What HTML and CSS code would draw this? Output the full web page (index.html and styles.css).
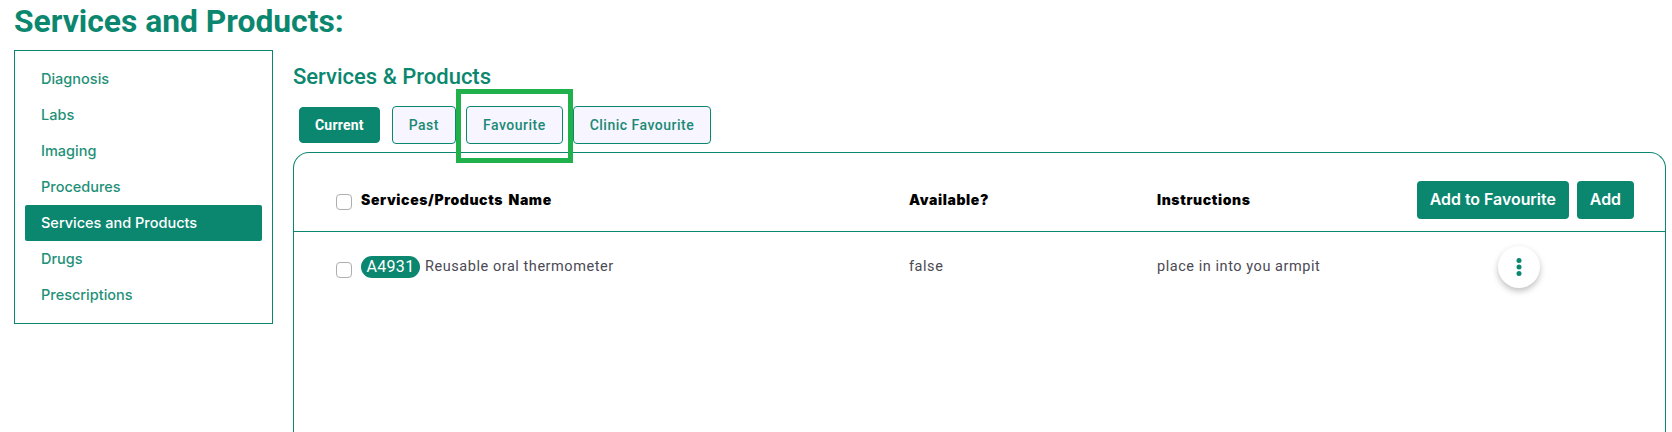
FILE: index.html
```html
<!DOCTYPE html>
<html lang="en">
<head>
<meta charset="utf-8">
<title>Services and Products</title>
<link rel="stylesheet" href="styles.css">
</head>
<body>
<h1 class="page-title">Services and Products:</h1>
<div class="layout">
  <nav class="side">
    <a class="side-item">Diagnosis</a>
    <a class="side-item">Labs</a>
    <a class="side-item">Imaging</a>
    <a class="side-item">Procedures</a>
    <a class="side-item active">Services and Products</a>
    <a class="side-item">Drugs</a>
    <a class="side-item">Prescriptions</a>
  </nav>
  <main class="main">
    <h2 class="section-title">Services &amp; Products</h2>
    <div class="tabs">
      <button class="tab current">Current</button>
      <button class="tab past">Past</button>
      <button class="tab fav">Favourite<span class="highlight"></span></button>
      <button class="tab">Clinic Favourite</button>
    </div>
    <section class="card">
      <div class="grid head">
        <div class="name-cell"><span class="check"></span><span>Services/Products Name</span></div>
        <div>Available?</div>
        <div>Instructions</div>
        <div class="actions"><button class="btn">Add to Favourite</button><button class="btn">Add</button></div>
      </div>
      <div class="grid row">
        <div class="name-cell"><span class="check"></span><span class="pill">A4931</span><span>Reusable oral thermometer</span></div>
        <div>false</div>
        <div>place in into you armpit</div>
        <div class="kebab-cell">
          <button class="kebab" aria-label="More">
            <svg width="6" height="18" viewBox="0 0 6 18"><circle cx="3" cy="2.5" r="2.5"/><circle cx="3" cy="9" r="2.5"/><circle cx="3" cy="15.5" r="2.5"/></svg>
          </button>
        </div>
      </div>
    </section>
  </main>
</div>
</body>
</html>
```
FILE: styles.css
```css
* { box-sizing: border-box; }
html, body { height: 432px; overflow: hidden; }
body { margin: 0; background: #fff; font-family: Roboto, sans-serif; color: #0b8770; }
.page-title { margin: 0; padding: 2px 0 0 14px; height: 50px; font: 700 31.8px/38px Roboto, sans-serif; color: #0b8770; }
.layout { display: flex; align-items: flex-start; padding-left: 14px; }
.side { width: 259px; height: 274px; flex: none; border: 1px solid #0b8770; padding: 10px 10px; display: flex; flex-direction: column; }
.side-item { height: 36px; flex: none; padding-left: 16px; font: 500 14.5px/36px Inter, sans-serif; color: #1f9078; border-radius: 2px; }
.side-item.active { background: #0b8770; color: #fff; }
.main { width: 1373px; margin-left: 20px; flex: none; }
.section-title { margin: 17px 0 0; height: 24px; font: 500 22px/20px Roboto, sans-serif; color: #0b8770; }
.tabs { display: flex; align-items: center; gap: 10px; height: 38px; margin: 15px 0 0 6px; }
.tab { position: relative; height: 38px; padding: 0 16px 1px; background: #f7f5ff; border: 1px solid #0b8770; border-radius: 4px; font: 500 14px/1 Roboto, sans-serif; letter-spacing: .5px; color: #1a8a75; }
.tab.current { height: 36px; padding: 0 15px 1px; background: #0b8770; color: #fff; font-weight: 700; letter-spacing: .2px; }
.tab.past { margin-left: 2px; }
.highlight { position: absolute; left: -11px; right: -11px; top: -18px; bottom: -20px; border: 5px solid #21b14c; }
.card { height: 300px; margin-top: 8px; width: 100%; border: 1px solid #0b8770; border-radius: 16px 16px 0 0; border-bottom: 0; }
.grid { display: grid; padding-left: 42px; }
.head { height: 79px; padding-top: 16px; align-items: center; border-bottom: 1px solid #0b8770; font: 900 14px/1 Inter, sans-serif; word-spacing: 2px; color: #000; letter-spacing: .6px; grid-template-columns: 573px 248px 1fr auto; padding-right: 31px; }
.row { padding-top: 24px; font: 400 14.5px/22px Roboto, sans-serif; letter-spacing: .55px; color: #4a4a55; grid-template-columns: 573px 248px 1fr auto; padding-right: 125px; }
.name-cell { display: flex; align-items: center; }
.row .name-cell { align-items: flex-start; }
.check { width: 16px; height: 16px; margin-right: 9px; border: 1px solid #adadad; border-radius: 4px; background: #fff; flex: none; }
.head .check { margin-top: 3px; }
.row .check { margin-top: 6px; }
.pill { height: 22px; width: 59px; margin-right: 5px; background: #0b8770; color: #fff; border-radius: 11px; text-align: center; font: 400 16px/22px Roboto, sans-serif; letter-spacing: .3px; }
.actions { display: flex; gap: 8px; word-spacing: 0; letter-spacing: 0; }
.btn { height: 38px; padding: 0 13px; background: #0b8770; color: #fff; border: 0; border-radius: 4px; font: 600 15.9px/1 Inter, sans-serif; }
.kebab-cell { display: flex; }
.kebab { width: 42px; height: 42px; margin-top: -10px; border: 0; border-radius: 50%; background: #fff; box-shadow: 0 3px 6px rgba(0,0,0,.25); display: flex; align-items: center; justify-content: center; padding: 0; }
.kebab svg { fill: #0b8770; }
```
